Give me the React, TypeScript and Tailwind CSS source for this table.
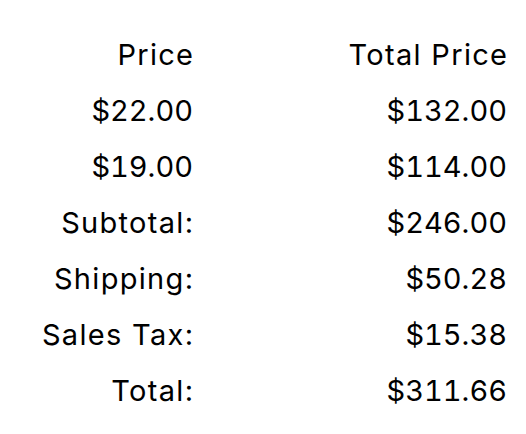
const rows: { label: string; value: string }[] = [
  { label: "$22.00", value: "$132.00" },
  { label: "$19.00", value: "$114.00" },
  { label: "Subtotal:", value: "$246.00" },
  { label: "Shipping:", value: "$50.28" },
  { label: "Sales Tax:", value: "$15.38" },
  { label: "Total:", value: "$311.66" },
];

const cell = "h-14 flex items-center justify-end whitespace-nowrap";
const label = "tracking-[0.045em] -mr-[0.045em]";
const money = "tabular-nums";

export default function App() {
  return (
    <div className="w-[526px] h-[434px] bg-white text-black pt-[26px] font-['Inter','Noto_Sans',sans-serif] font-normal">
      <div className="grid grid-cols-[193px_314px] text-[29px] leading-none">
        <div className={`${cell} ${label}`}>Price</div>
        <div className={`${cell} ${label}`}>Total Price</div>
        {rows.map((r) => (
          <div key={r.label} className="contents">
            <div className={`${cell} ${r.label.startsWith("$") ? money : label}`}>{r.label}</div>
            <div className={`${cell} ${money}`}>{r.value}</div>
          </div>
        ))}
      </div>
    </div>
  );
}
